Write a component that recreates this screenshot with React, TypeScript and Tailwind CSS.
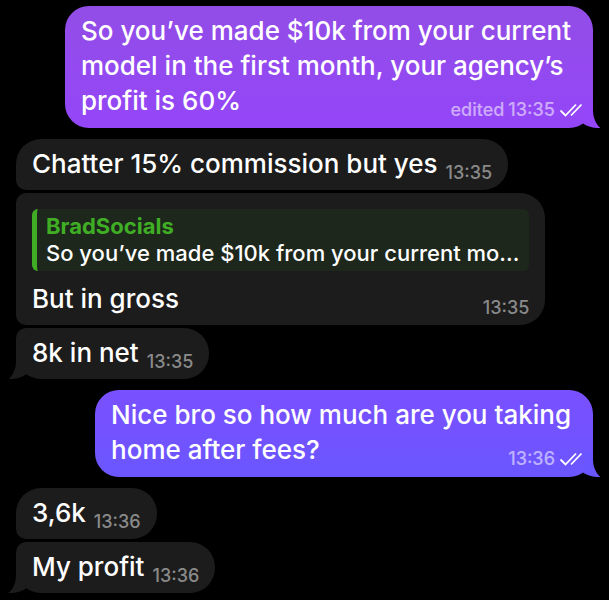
import type { ReactNode } from "react";
import clsx from "clsx";

interface Message {
  id: number;
  lines: string[];
  time: string;
  outgoing?: boolean;
  edited?: boolean;
  reply?: { author: string; text: string };
}

// consecutive messages from the same person sit in one group
const groups: Message[][] = [
  [
    {
      id: 1,
      lines: [
        "So you’ve made $10k from your current",
        "model in the first month, your agency’s",
        "profit is 60%",
      ],
      time: "13:35",
      outgoing: true,
      edited: true,
    },
  ],
  [
    { id: 2, lines: ["Chatter 15% commission but yes"], time: "13:35" },
    {
      id: 3,
      lines: ["But in gross"],
      time: "13:35",
      reply: {
        author: "BradSocials",
        text: "So you’ve made $10k from your current mo...",
      },
    },
    { id: 4, lines: ["8k in net"], time: "13:35" },
  ],
  [
    {
      id: 5,
      lines: ["Nice bro so how much are you taking", "home after fees?"],
      time: "13:36",
      outgoing: true,
    },
  ],
  [
    { id: 6, lines: ["3,6k"], time: "13:36" },
    { id: 7, lines: ["My profit"], time: "13:36" },
  ],
];

function Tail({ className }: { className: string }) {
  return (
    <svg viewBox="0 0 30 24" className={clsx("absolute bottom-0 h-6 w-[30px]", className)} aria-hidden="true">
      <path d="M14 0H22V6C22 14 25 20 29.5 24C23 24.4 16.5 22.8 12 19.5Z" fill="currentColor" />
    </svg>
  );
}

function ReadTicks() {
  return (
    <svg viewBox="0 0 24 16" className="h-4 w-6" fill="none" stroke="white" strokeWidth="1.8" aria-label="Read">
      <path d="M1.5 8.5L6.5 13.5L17 2.5" />
      <path d="M12 13.5L22.5 2.5" />
    </svg>
  );
}

function Meta({ message }: { message: Message }) {
  return (
    <span
      className={clsx(
        "-mb-0.5 flex shrink-0 items-center text-[18px] leading-5 font-medium",
        message.outgoing ? "-mr-3 gap-1 text-white/55" : "text-[#8a8a8a]"
      )}
    >
      {message.edited && <span>edited</span>}
      <time>{message.time}</time>
      {message.outgoing && <ReadTicks />}
    </span>
  );
}

function Quote({ author, children }: { author: string; children: ReactNode }) {
  return (
    <blockquote className="mt-[9px] mb-[10px] rounded-md border-l-[5px] border-[#3fae24] bg-[#1e271c] py-1 pr-[10px] pl-[9px] text-[22px] leading-[27px]">
      <p className="font-bold text-[#3fae24]">{author}</p>
      <p className="truncate font-medium text-white">{children}</p>
    </blockquote>
  );
}

// the last line shares its row with the time
function Body({ message }: { message: Message }) {
  const { lines } = message;
  return (
    <div className="text-white">
      {lines.slice(0, -1).map((line) => (
        <p key={line}>{line}</p>
      ))}
      <div className="flex items-end justify-between gap-2">
        <p>{lines[lines.length - 1]}</p>
        <Meta message={message} />
      </div>
    </div>
  );
}

function Bubble({ message, first, last }: { message: Message; first: boolean; last: boolean }) {
  const { outgoing, reply, id } = message;

  if (outgoing) {
    return (
      <div
        className={clsx(
          "relative max-w-full self-end rounded-3xl bg-linear-to-b pt-[7px] pr-[22px] pb-[10px] pl-4",
          id === 1 ? "from-[#924de6] to-[#9446f8] text-[#9446f8]" : "from-[#7a50ff] to-[#6a56ff] text-[#6a56ff]"
        )}
      >
        <Body message={message} />
        <Tail className="-right-2" />
      </div>
    );
  }

  return (
    <div
      className={clsx(
        "relative max-w-full self-start rounded-r-[25px] bg-[#1c1c1c] px-4 pt-[7px] pb-[9px] text-[#1c1c1c]",
        first ? "rounded-tl-[25px]" : "rounded-tl-[10px]",
        last ? "rounded-bl-[25px]" : "rounded-bl-[10px]"
      )}
    >
      {reply && <Quote author={reply.author}>{reply.text}</Quote>}
      <Body message={message} />
      {last && <Tail className="-left-2 -scale-x-100" />}
    </div>
  );
}

export default function App() {
  return (
    <main className="flex min-h-screen flex-col gap-[11px] bg-black px-4 py-1.5 font-['Inter',sans-serif] text-[26px] leading-[35px] font-medium">
      {groups.map((group) => (
        <section key={group[0].id} className="flex flex-col gap-[3px]">
          {group.map((message, i) => (
            <Bubble key={message.id} message={message} first={i === 0} last={i === group.length - 1} />
          ))}
        </section>
      ))}
    </main>
  );
}
